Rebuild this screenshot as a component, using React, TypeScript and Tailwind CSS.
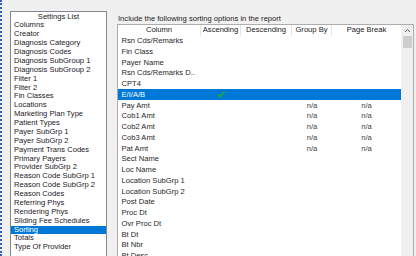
import React from 'react';

const settings = [
  'Columns', 'Creator', 'Diagnosis Category', 'Diagnosis Codes', 'Diagnosis SubGroup 1',
  'Diagnosis SubGroup 2', 'Filter 1', 'Filter 2', 'Fin Classes', 'Locations',
  'Marketing Plan Type', 'Patient Types', 'Payer SubGrp 1', 'Payer SubGrp 2',
  'Payment Trans Codes', 'Primary Payers', 'Provider SubGrp 2', 'Reason Code SubGrp 1',
  'Reason Code SubGrp 2', 'Reason Codes', 'Referring Phys', 'Rendering Phys',
  'Sliding Fee Schedules', 'Sorting', 'Totals', 'Type Of Provider',
];

interface SortRow {
  name: string;
  asc?: boolean;
  na?: boolean;
  selected?: boolean;
}

const rows: SortRow[] = [
  { name: 'Rsn Cds/Remarks' },
  { name: 'Fin Class' },
  { name: 'Payer Name' },
  { name: 'Rsn Cds/Remarks D..' },
  { name: 'CPT4' },
  { name: 'E/I/A/B', asc: true, selected: true },
  { name: 'Pay Amt', na: true },
  { name: 'Cob1 Amt', na: true },
  { name: 'Cob2 Amt', na: true },
  { name: 'Cob3 Amt', na: true },
  { name: 'Pat Amt', na: true },
  { name: 'Sect Name' },
  { name: 'Loc Name' },
  { name: 'Location SubGrp 1' },
  { name: 'Location SubGrp 2' },
  { name: 'Post Date' },
  { name: 'Proc Dt' },
  { name: 'Ovr Proc Dt' },
  { name: 'Bt Dt' },
  { name: 'Bt Nbr' },
  { name: 'Bt Desc' },
];

function Check() {
  return (
    <svg width="8" height="7" viewBox="0 0 8 7">
      <path d="M1 3.8 L3 5.8 L7 1" fill="none" stroke="#1fa83a" strokeWidth="1.7" strokeLinecap="round" strokeLinejoin="round" />
    </svg>
  );
}

export default function App() {
  const font = { fontFamily: '"Liberation Sans", Arial, sans-serif' };
  const headCls = 'h-full flex items-center justify-center border-r border-[#e5e5e5]';

  return (
    <div className="w-[416px] h-[256px] overflow-hidden bg-[#f0f0f0] flex text-[7.6px] text-[#1a1a1a]" style={font}>
      {/* focus line */}
      <div className="w-[2px] h-full border-l-2 border-dotted border-[#2d5fc4]" />

      {/* Settings list */}
      <div className="ml-[8px] mt-[11px] w-[97px] h-[260px] bg-white border border-b-0 border-[#828790] shrink-0">
        <div className="h-[8.9px] leading-[8.9px] text-center mt-[0.6px]">Settings List</div>
        {settings.map((s) => (
          <div key={s}
            className={`h-[8.88px] leading-[8.88px] pl-[3px] whitespace-nowrap ${s === 'Sorting' ? 'bg-[#0078d7] text-white' : 'text-[#241826]'}`}>
            {s}
          </div>
        ))}
      </div>

      {/* Sorting options */}
      <div className="ml-[10px] pt-[14px] flex flex-col">
        <div className="h-[9px] leading-[9px] pl-[1px] whitespace-nowrap">Include the following sorting options in the report</div>
        <div className="mt-[1px] w-[297px] h-[240px] bg-white border border-b-0 border-[#adadad] flex">
          <div className="w-[283px]">
            <div className="h-[10.5px] flex leading-none">
              <div className={`w-[83px] ${headCls}`}>Column</div>
              <div className={`w-[40px] ${headCls}`}>Ascending</div>
              <div className={`w-[51px] ${headCls}`}>Descending</div>
              <div className={`w-[40px] ${headCls}`}>Group By</div>
              <div className="w-[69px] h-full flex items-center justify-center">Page Break</div>
            </div>
            {rows.map((r) => (
              <div key={r.name}
                className={`h-[10.75px] flex items-center whitespace-nowrap ${r.selected ? 'bg-[#0078d7] text-white' : 'text-[#1f1f1f]'}`}>
                <div className="w-[83px] pl-[3.5px]">{r.name}</div>
                <div className="w-[40px] flex justify-center">{r.asc && <Check />}</div>
                <div className="w-[51px]" />
                <div className="w-[40px] text-center text-[#404040]">{r.na ? 'n/a' : ''}</div>
                <div className="w-[69px] text-center text-[#404040]">{r.na ? 'n/a' : ''}</div>
              </div>
            ))}
          </div>
          {/* scrollbar */}
          <div className="w-[12px] bg-[#f0f0f0] flex flex-col items-center">
            <div className="h-[11px] flex items-center justify-center">
              <svg width="7" height="5" viewBox="0 0 7 5">
                <path d="M1 4 L3.5 1.5 L6 4" fill="none" stroke="#606060" strokeWidth="1" />
              </svg>
            </div>
            <div className="w-[9px] h-[12px] bg-[#cdcdcd]" />
          </div>
        </div>
      </div>
    </div>
  );
}
